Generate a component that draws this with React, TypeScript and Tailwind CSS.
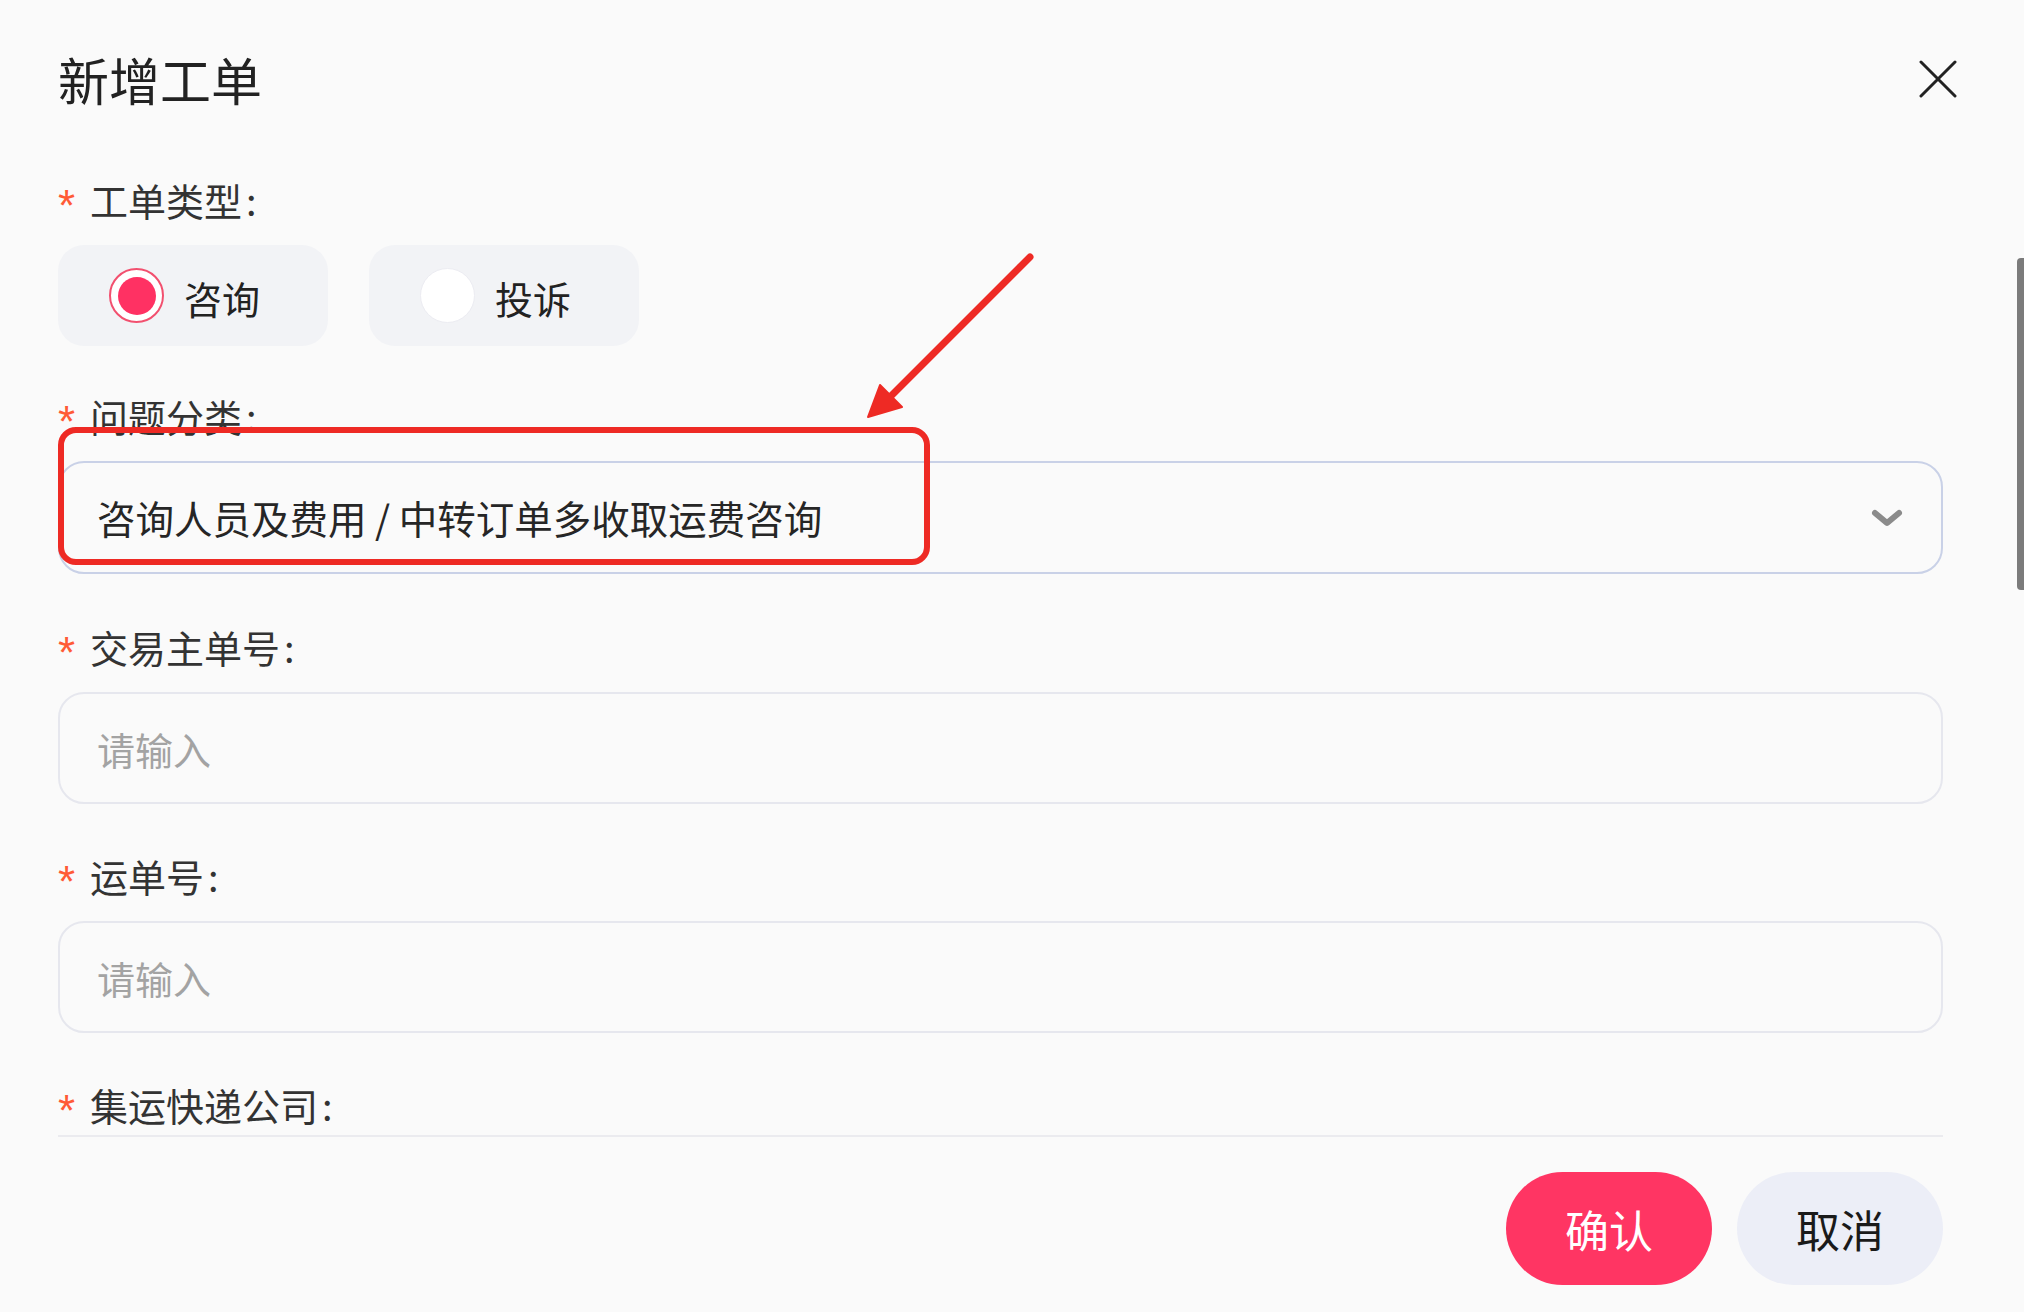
import React from 'react';

// 表单字段标签（带红色星号）
function FieldLabel({ text }: { text: string }) {
  return (
    <div className="flex items-center h-[50px] text-[38px] leading-[50px] text-[#333333]">
      <span className="w-[32px] h-[44px] pt-[6px] font-['Liberation_Sans',sans-serif] text-[#ff5a36] text-[44px] leading-none">*</span>
      <span>{text}<span className="ml-[4px]">:</span></span>
    </div>
  );
}

function Radio({ label, checked }: { label: string; checked?: boolean }) {
  return (
    <div className="flex items-center w-[270px] h-[101px] rounded-[26px] bg-[#f2f3f6] pl-[51px]">
      {checked ? (
        <span className="flex items-center justify-center w-[55px] h-[55px] rounded-full border-[2px] border-[#f2506f] bg-white">
          <span className="w-[38px] h-[38px] rounded-full bg-[#ff3163]" />
        </span>
      ) : (
        <span className="w-[55px] h-[55px] rounded-full border border-[#ececf2] bg-white" />
      )}
      <span className="ml-[20px] text-[38px] text-[#222222] mt-[4px]">{label}</span>
    </div>
  );
}

function TextInput() {
  return (
    <div className="mt-[20px] flex items-center h-[112px] rounded-[26px] border-[2px] border-[#e6e7ee] px-[37px]">
      <span className="text-[38px] text-[#a3a3a3]">请输入</span>
    </div>
  );
}

export default function App() {
  return (
    <div className="relative w-[2024px] h-[1312px] overflow-hidden bg-[#fafafa] font-['Noto_Sans_CJK_SC','Noto_Sans',sans-serif]">
      <div className="pl-[58px] pr-[81px]">
        {/* 标题 */}
        <div className="mt-[54px] flex items-center justify-between h-[50px] -mr-[14px]">
          <h1 className="text-[51px] leading-[50px] text-[#222222]">新增工单</h1>
          <svg width="38" height="38" viewBox="0 0 38 38" fill="none">
            <path d="M2 2L36 36M36 2L2 36" stroke="#222" strokeWidth="3" strokeLinecap="round" />
          </svg>
        </div>

        {/* 工单类型 */}
        <div className="mt-[71px]">
          <FieldLabel text="工单类型" />
          <div className="mt-[20px] flex gap-[41px]">
            <Radio label="咨询" checked />
            <Radio label="投诉" />
          </div>
        </div>

        {/* 问题分类 */}
        <div className="mt-[45px]">
          <FieldLabel text="问题分类" />
          <div className="relative mt-[20px]">
            <div className="flex items-center justify-between h-[113px] rounded-[26px] border-[2px] border-[#c9d1e7] pl-[37px] pr-[38px]">
              <span className="text-[38.5px] text-[#262626]">咨询人员及费用 / 中转订单多收取运费咨询</span>
              <svg width="32" height="18" viewBox="0 0 32 18" fill="none">
                <path d="M4 4L16 14L28 4" stroke="#8b8b8b" strokeWidth="6" strokeLinecap="round" strokeLinejoin="round" />
              </svg>
            </div>
            {/* 标注框 */}
            <div className="absolute left-0 -top-[34px] w-[872px] h-[138px] rounded-[18px] border-[6px] border-[#ee2a24] pointer-events-none" />
          </div>
        </div>

        {/* 交易主单号 */}
        <div className="mt-[48px]">
          <FieldLabel text="交易主单号" />
          <TextInput />
        </div>

        {/* 运单号 */}
        <div className="mt-[47px]">
          <FieldLabel text="运单号" />
          <TextInput />
        </div>

        {/* 集运快递公司 */}
        <div className="mt-[47px]">
          <FieldLabel text="集运快递公司" />
        </div>
        <div className="mt-[5px] h-[2px] bg-[#ebebef]" />

        {/* 按钮 */}
        <div className="mt-[35px] flex justify-end gap-[25px]">
          <button className="w-[206px] h-[113px] rounded-full bg-[#ff3563] text-[44px] text-white">确认</button>
          <button className="w-[206px] h-[113px] rounded-full bg-[#eceef7] text-[44px] text-[#1a1a1a]">取消</button>
        </div>
      </div>

      {/* 滚动条 */}
      <div className="absolute right-0 top-[258px] w-[7px] h-[332px] rounded-l-[4px] bg-[#7b7b7b]" />

      {/* 标注箭头 */}
      <svg className="absolute left-[850px] top-[240px] pointer-events-none" width="200" height="200" viewBox="0 0 200 200" fill="none">
        <path d="M180 17L40 157" stroke="#ee2a24" strokeWidth="7" strokeLinecap="round" />
        <path d="M18 177L30 145L52 167Z" fill="#ee2a24" stroke="#ee2a24" strokeWidth="2" strokeLinejoin="round" />
      </svg>
    </div>
  );
}
